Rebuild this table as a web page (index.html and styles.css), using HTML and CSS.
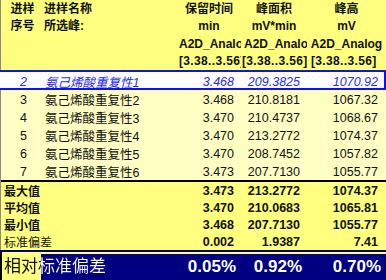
FILE: index.html
```html
<!DOCTYPE html>
<html lang="zh">
<head>
<meta charset="utf-8">
<link rel="stylesheet" href="styles.css">
</head>
<body>
<div class="sheet">
  <div class="head">
    <div class="hrow">
      <div class="c1">进样</div>
      <div class="c2">进样名称</div>
      <div class="c3 ctr">保留时间</div>
      <div class="c4 ctr">峰面积</div>
      <div class="c5 ctr">峰高</div>
    </div>
    <div class="hrow">
      <div class="c1">序号</div>
      <div class="c2">所选峰:</div>
      <div class="c3 ctr">min</div>
      <div class="c4 ctr">mV*min</div>
      <div class="c5 ctr">mV</div>
    </div>
    <div class="hrow">
      <div class="c1"></div>
      <div class="c2"></div>
      <div class="c3 clip p2">A2D_Analog</div>
      <div class="c4 clip p3">A2D_Analog</div>
      <div class="c5 ctr">A2D_Analog</div>
    </div>
    <div class="hrow br">
      <div class="c1"></div>
      <div class="c2"></div>
      <div class="c3 clip p2">[3.38..3.56]</div>
      <div class="c4 clip p1">[3.38..3.56]</div>
      <div class="c5 clip p4">[3.38..3.56]</div>
    </div>
  </div>

  <div class="row sel">
    <div class="c1 num">2</div>
    <div class="c2 name">氨己烯酸重复性1</div>
    <div class="c3 val">3.468</div>
    <div class="c4 val">209.3825</div>
    <div class="c5 val">1070.92</div>
  </div>
  <div class="row">
    <div class="c1 num">3</div>
    <div class="c2 name">氨己烯酸重复性2</div>
    <div class="c3 val">3.468</div>
    <div class="c4 val">210.8181</div>
    <div class="c5 val">1067.32</div>
  </div>
  <div class="row">
    <div class="c1 num">4</div>
    <div class="c2 name">氨己烯酸重复性3</div>
    <div class="c3 val">3.470</div>
    <div class="c4 val">210.4737</div>
    <div class="c5 val">1068.67</div>
  </div>
  <div class="row">
    <div class="c1 num">5</div>
    <div class="c2 name">氨己烯酸重复性4</div>
    <div class="c3 val">3.470</div>
    <div class="c4 val">213.2772</div>
    <div class="c5 val">1074.37</div>
  </div>
  <div class="row">
    <div class="c1 num">6</div>
    <div class="c2 name">氨己烯酸重复性5</div>
    <div class="c3 val">3.470</div>
    <div class="c4 val">208.7452</div>
    <div class="c5 val">1057.82</div>
  </div>
  <div class="row">
    <div class="c1 num">7</div>
    <div class="c2 name">氨己烯酸重复性6</div>
    <div class="c3 val">3.473</div>
    <div class="c4 val">207.7130</div>
    <div class="c5 val">1055.77</div>
  </div>

  <div class="stats">
    <div class="srow">
      <div class="lab">最大值</div>
      <div class="c3 val">3.473</div>
      <div class="c4 val">213.2772</div>
      <div class="c5 val">1074.37</div>
    </div>
    <div class="srow">
      <div class="lab">平均值</div>
      <div class="c3 val">3.470</div>
      <div class="c4 val">210.0683</div>
      <div class="c5 val">1065.81</div>
    </div>
    <div class="srow">
      <div class="lab">最小值</div>
      <div class="c3 val">3.468</div>
      <div class="c4 val">207.7130</div>
      <div class="c5 val">1055.77</div>
    </div>
    <div class="srow">
      <div class="lab thin">标准偏差</div>
      <div class="c3 val">0.002</div>
      <div class="c4 val">1.9387</div>
      <div class="c5 val">7.41</div>
    </div>
  </div>

  <div class="total">
    <div class="tin">
      <div class="tlab"><span class="ttext">相对标准偏差</span></div>
      <div class="c3 pct">0.05%</div>
      <div class="c4 pct">0.92%</div>
      <div class="c5 pct p5">0.70%</div>
    </div>
  </div>
</div>
</body>
</html>
```

FILE: styles.css
```css
html, body {
  margin: 0;
  padding: 0;
  background: #ffffff;
}
body {
  width: 386px;
  height: 280px;
  overflow: hidden;
  font-family: "Liberation Sans", "Noto Sans CJK SC", sans-serif;
  font-size: 12px;
  color: #111;
}
.sheet {
  width: 386px;
  border-left: 1px solid #8a8a8a;
  box-sizing: border-box;
}
.head {
  background: #ffff80;
  font-weight: bold;
  padding-top: 1px;
}
.hrow, .row, .srow, .tin {
  display: grid;
  grid-template-columns: 41px 135px 64px 66px 79px;
  align-items: center;
}
.hrow {
  height: 17.25px;
  line-height: 17px;
  white-space: nowrap;
}
.c1 { grid-column: 1; text-align: center; padding-left: 2px; }
.c2 { grid-column: 2; padding-left: 2px; }
.c3 { grid-column: 3; }
.c4 { grid-column: 4; }
.c5 { grid-column: 5; }
.ctr { text-align: center; }
.clip { overflow: hidden; white-space: nowrap; }
.p1 { padding-left: 1px; }
.p2 { padding-left: 2px; }
.p3 { padding-left: 3px; }
.p4 { padding-left: 4px; }
.br { letter-spacing: 0.35px; }

.row {
  height: 18px;
  background: #ffffc4;
  font-size: 12.5px;
}
.row.sel {
  height: 16px;
  background: #ffffff;
  border-top: 2px solid #1010f0;
  border-bottom: 2px solid #1010f0;
  border-right: 2px solid #1010f0;
  margin-left: -1px;
  padding-left: 1px;
  color: #2a2af0;
  font-style: italic;
  grid-template-columns: 41px 135px 64px 66px 77px;
}
.num { text-align: right; padding-right: 15px; }
.name { padding-left: 3px; white-space: nowrap; }
.val { text-align: right; padding-right: 7px; }
.row .c5.val { padding-right: 8px; }
.row.sel .c5.val { padding-right: 6px; }

.stats {
  background: #ffff80;
  border-top: 2px solid #000;
  font-weight: bold;
  font-size: 12.5px;
}
.srow {
  height: 17px;
}
.lab {
  grid-column: 1 / span 2;
  padding-left: 3px;
  font-size: 12px;
}
.lab.thin { font-weight: normal; }
.srow .c5.val { padding-right: 8px; }

.total {
  background: #ffff80;
  border-top: 2px solid #000080;
  padding-top: 2px;
  margin-left: -1px;
  border-left: 2px solid #000;
}
.tin {
  height: 26px;
  background: linear-gradient(90deg, transparent 39px, #000080 39px);
  grid-template-columns: 39px 135px 64px 66px 80px;
}
.tlab {
  grid-column: 1 / span 2;
  padding-left: 2px;
  white-space: nowrap;
  font-size: 17px;
  line-height: 24px;
}
.ttext {
  background: linear-gradient(90deg, #111 37px, #ffffff 37px);
  -webkit-background-clip: text;
  background-clip: text;
  color: transparent;
}
.pct {
  color: #ffffff;
  font-weight: bold;
  font-size: 17px;
  text-align: right;
  padding-right: 4px;
}
.p5 { padding-right: 5px; }
```
